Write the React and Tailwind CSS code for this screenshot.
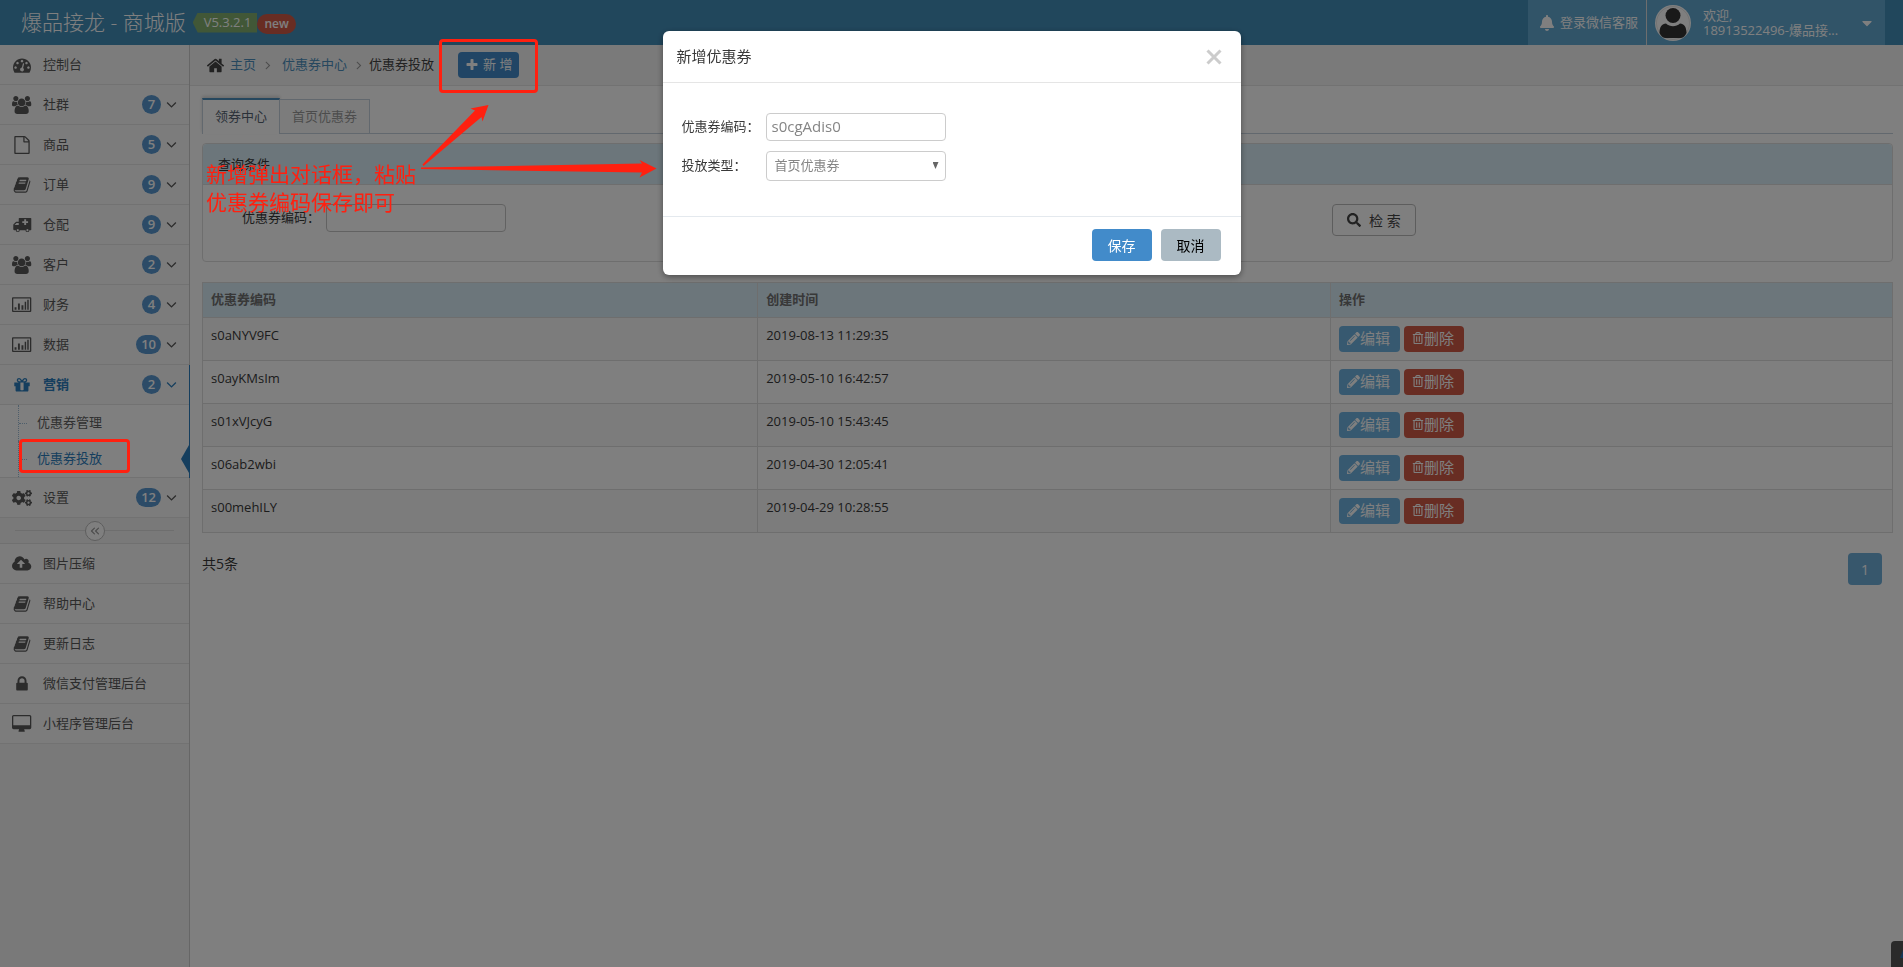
import { FaBell, FaCaretDown, FaCogs, FaPencilAlt, FaRegTrashAlt, FaSearch } from 'react-icons/fa';
import { ChevronsLeft } from 'lucide-react';

const ICONS = {
  dashboard: { w: 1792, d: 'M384 1152q0-53-37.5-90.5t-90.5-37.5-90.5 37.5-37.5 90.5 37.5 90.5 90.5 37.5 90.5-37.5 37.5-90.5zm192-448q0-53-37.5-90.5t-90.5-37.5-90.5 37.5-37.5 90.5 37.5 90.5 90.5 37.5 90.5-37.5 37.5-90.5zm428 481l101-382q6-26-7.5-48.5t-38.5-29.5-48 6.5-30 39.5l-101 382q-60 5-107 43.5t-63 98.5q-20 77 20 146t117 89 146-20 89-117q16-60-6-117t-72-91zm660-33q0-53-37.5-90.5t-90.5-37.5-90.5 37.5-37.5 90.5 37.5 90.5 90.5 37.5 90.5-37.5 37.5-90.5zm-640-640q0-53-37.5-90.5t-90.5-37.5-90.5 37.5-37.5 90.5 37.5 90.5 90.5 37.5 90.5-37.5 37.5-90.5zm448 192q0-53-37.5-90.5t-90.5-37.5-90.5 37.5-37.5 90.5 37.5 90.5 90.5 37.5 90.5-37.5 37.5-90.5zm320 448q0 261-141 483-19 29-54 29h-1402q-35 0-54-29-141-221-141-483 0-182 71-348t191-286 286-191 348-71 348 71 286 191 191 286 71 348z' },
  users: { w: 1920, d: 'M593 896q-162 5-265 128h-134q-82 0-138-40.5t-56-118.5q0-353 124-353 6 0 43.5 21t97.5 42.5 119 21.5q67 0 133-23-5 37-5 66 0 139 81 256zm1071 637q0 120-73 189.5t-194 69.5h-874q-121 0-194-69.5t-73-189.5q0-53 3.5-103.5t14-109 26.5-108.5 43-97.5 62-81 85.5-53.5 111.5-20q10 0 43 21.5t73 48 107 48 135 21.5 135-21.5 107-48 73-48 43-21.5q61 0 111.5 20t85.5 53.5 62 81 43 97.5 26.5 108.5 14 109 3.5 103.5zm-1024-1277q0 106-75 181t-181 75-181-75-75-181 75-181 181-75 181 75 75 181zm704 384q0 159-112.5 271.5t-271.5 112.5-271.5-112.5-112.5-271.5 112.5-271.5 271.5-112.5 271.5 112.5 112.5 271.5zm576 225q0 78-56 118.5t-138 40.5h-134q-103-123-265-128 81-117 81-256 0-29-5-66 66 23 133 23 59 0 119-21.5t97.5-42.5 43.5-21q124 0 124 353zm-128-609q0 106-75 181t-181 75-181-75-75-181 75-181 181-75 181 75 75 181z' },
  file: { w: 1792, d: 'M1596 380q28 28 48 76t20 88v1152q0 40-28 68t-68 28h-1344q-40 0-68-28t-28-68v-1600q0-40 28-68t68-28h896q40 0 88 20t76 48zm-444-244v376h376q-10-29-22-41l-313-313q-12-12-41-22zm384 1528v-1024h-416q-40 0-68-28t-28-68v-416h-768v1536h1280z' },
  book: { w: 1792, d: 'M1703 478q40 57 18 129l-275 906q-19 64-76.5 107.5t-122.5 43.5h-923q-77 0-148.5-53.5t-99.5-131.5q-24-67-2-127 0-4 3-27t4-37q1-8-3-21.5t-3-19.5q2-11 8-21t16.5-23.5 16.5-23.5q23-38 45-91.5t30-91.5q3-10 .5-30t-.5-28q3-11 17-28t17-23q21-36 42-92t25-90q1-9-2.5-32t.5-28q4-13 22-30.5t22-22.5q19-26 42.5-84.5t27.5-96.5q1-8-3-25.5t-2-26.5q2-8 9-18t18-23 17-21q8-12 16.5-30.5t15-35 16-36 19.5-32 26.5-23.5 36-11.5 47.5 5.5l-1 3q38-9 51-9h761q74 0 114 56t18 130l-274 906q-36 119-71.5 153.5t-128.5 34.5h-869q-27 0-38 15-11 16-1 43 24 70 144 70h923q29 0 56-15.5t35-41.5l300-987q7-22 5-57 38 15 59 43zm-1064 2q-4 13 2 22.5t20 9.5h608q13 0 25.5-9.5t16.5-22.5l21-64q4-13-2-22.5t-20-9.5h-608q-13 0-25.5 9.5t-16.5 22.5zm-83 256q-4 13 2 22.5t20 9.5h608q13 0 25.5-9.5t16.5-22.5l21-64q4-13-2-22.5t-20-9.5h-608q-13 0-25.5 9.5t-16.5 22.5z' },
  ambulance: { w: 1920, d: 'M736 192H1856q64 0 64 64V1344q0 64-64 64H1728a192 192 0 0 1-384 0H768a192 192 0 0 1-384 0H256q-128 0-128-96V880q0-40 28-68l200-200q28-28 68-28H672V256q0-64 64-64zM256 896H672V704H450L256 896zM1216 320V512H1024V704H1216V896H1408V704H1600V512H1408V320zM576 1304a104 104 0 1 0 .1 0zM1536 1304a104 104 0 1 0 .1 0z' },
  chart: { w: 1920, d: 'M96 128H1824q96 0 96 96V1504q0 96-96 96H96q-96 0-96-96V224q0-96 96-96zM128 256V1472H1792V256zM256 1120H448V1376H256zM592 736H784V1376H592zM944 928H1136V1376H944zM1264 576H1408V1376H1264zM1520 384H1664V1376H1520z' },
  gift: { w: 1792, d: 'M1056 1356v-716h-320v716q0 25 18 38.5t46 13.5h192q28 0 46-13.5t18-38.5zm-456-844h195l-126-161q-26-31-69-31-40 0-68 28t-28 68 28 68 68 28zm688-96q0-40-28-68t-68-28q-43 0-69 31l-125 161h194q40 0 68-28t28-68zm376 256v320q0 14-9 23t-23 9h-96v416q0 40-28 68t-68 28h-1088q-40 0-68-28t-28-68v-416h-96q-14 0-23-9t-9-23v-320q0-14 9-23t23-9h440q-93 0-158.5-65.5t-65.5-158.5 65.5-158.5 158.5-65.5q107 0 168 77l128 165 128-165q61-77 168-77 93 0 158.5 65.5t65.5 158.5-65.5 158.5-158.5 65.5h440q14 0 23 9t9 23z' },
  home: { w: 1792, d: 'M1472 992v480q0 26-19 45t-45 19h-384v-384h-256v384h-384q-26 0-45-19t-19-45v-480q0-1 .5-3t.5-3l575-474 575 474q1 2 1 6zm223-69l-62 74q-8 9-21 11h-3q-13 0-21-7l-692-577-692 577q-12 8-24 7-13-2-21-11l-62-74q-8-10-7-23.5t11-21.5l719-599q32-26 76-26t76 26l244 204v-195q0-14 9-23t23-9h192q14 0 23 9t9 23v408l219 182q10 8 11 21.5t-7 23.5z' },
  cloud: { w: 1920, d: 'M1280 864q0-14-9-23l-352-352q-9-9-23-9t-23 9l-351 351q-10 12-10 24 0 14 9 23t23 9h224v352q0 13 9.5 22.5t22.5 9.5h192q13 0 22.5-9.5t9.5-22.5v-352h224q13 0 22.5-9.5t9.5-22.5zm640 288q0 159-112.5 271.5t-271.5 112.5h-1088q-185 0-316.5-131.5t-131.5-316.5q0-130 70-240t188-165q-2-30-2-43 0-212 150-362t362-150q156 0 285.5 87t188.5 231q71-62 166-62 106 0 181 75t75 181q0 76-41 138 130 31 213.5 135.5t83.5 238.5z' },
  lock: { w: 1792, d: 'M640 768h512v-192q0-106-75-181t-181-75-181 75-75 181v192zm832 96v576q0 40-28 68t-68 28h-960q-40 0-68-28t-28-68v-576q0-40 28-68t68-28h32v-192q0-184 132-316t316-132 316 132 132 316v192h32q40 0 68 28t28 68z' },
  desktop: { w: 1920, d: 'M1792 992v-832q0-13-9.5-22.5t-22.5-9.5h-1600q-13 0-22.5 9.5t-9.5 22.5v832q0 13 9.5 22.5t22.5 9.5h1600q13 0 22.5-9.5t9.5-22.5zm128-832v1088q0 66-47 113t-113 47h-544q0 37 16 77.5t32 71 16 43.5q0 26-19 45t-45 19h-512q-26 0-45-19t-19-45q0-14 16-44t32-70 16-78h-544q-66 0-113-47t-47-113v-1088q0-66 47-113t113-47h1600q66 0 113 47t47 113z' },
  plus: { w: 1792, d: 'M1600 736v192q0 40-28 68t-68 28h-416v416q0 40-28 68t-68 28h-192q-40 0-68-28t-28-68v-416h-416q-40 0-68-28t-28-68v-192q0-40 28-68t68-28h416v-416q0-40 28-68t68-28h192q40 0 68 28t28 68v416h416q40 0 68 28t28 68z' },
  angleDown: { w: 1792, d: 'M1395 736q0 13-10 23l-466 466q-10 10-23 10t-23-10l-466-466q-10-10-10-23t10-23l50-50q10-10 23-10t23 10l393 393 393-393q10-10 23-10t23 10l50 50q10 10 10 23z' },
  angleRight: { w: 1792, d: 'M1171 960q0 13-10 23l-466 466q-10 10-23 10t-23-10l-50-50q-10-10-10-23t10-23l393-393-393-393q-10-10-10-23t10-23l50-50q10-10 23-10t23 10l466 466q10 10 10 23z' },
};

function Icon({ name, className }) {
  const { w, d } = ICONS[name];
  return (
    <svg viewBox={`0 0 ${w} 1792`} className={className} fill="currentColor" aria-hidden="true">
      <path fillRule="evenodd" d={d} />
    </svg>
  );
}

const menu = [
  { icon: 'dashboard', label: '控制台' },
  { icon: 'users', label: '社群', count: 7 },
  { icon: 'file', label: '商品', count: 5 },
  { icon: 'book', label: '订单', count: 9 },
  { icon: 'ambulance', label: '仓配', count: 9 },
  { icon: 'users', label: '客户', count: 2 },
  { icon: 'chart', label: '财务', count: 4 },
  { icon: 'chart', label: '数据', count: 10 },
  { icon: 'gift', label: '营销', count: 2, children: ['优惠券管理', '优惠券投放'] },
  { icon: 'cogs', label: '设置', count: 12 },
];

const tools = [
  { icon: 'cloud', label: '图片压缩' },
  { icon: 'book', label: '帮助中心' },
  { icon: 'book', label: '更新日志' },
  { icon: 'lock', label: '微信支付管理后台' },
  { icon: 'desktop', label: '小程序管理后台' },
];

const coupons = [
  { code: 's0aNYV9FC', time: '2019-08-13 11:29:35' },
  { code: 's0ayKMsIm', time: '2019-05-10 16:42:57' },
  { code: 's01xVJcyG', time: '2019-05-10 15:43:45' },
  { code: 's06ab2wbi', time: '2019-04-30 12:05:41' },
  { code: 's00mehILY', time: '2019-04-29 10:28:55' },
];

function Header() {
  return (
    <header className="flex h-[45px] items-stretch bg-[#438eb9] pr-[18px] text-white">
      <div className="flex items-center pl-[21px]">
        <a href="#" className="text-[21px] leading-[45px] font-light">爆品接龙 - 商城版</a>
        <span className="ml-[7px] flex h-5 items-center bg-[#82af6f] pr-1.5 pl-[11px] text-[13px] [clip-path:polygon(5px_0,100%_0,100%_100%,5px_100%,0_50%)]">V5.3.2.1</span>
        <span className="mt-[2px] flex h-5 items-center rounded-full bg-[#d15b47] px-[7px] text-[12px] font-semibold">new</span>
      </div>
      <div className="ml-auto flex">
        <a href="#" className="flex items-center gap-[5px] border-r border-[#ddd] bg-[#62a8d1] pr-2 pl-[11px] text-[13px]">
          <FaBell className="size-4" />
          登录微信客服
        </a>
        <button className="flex items-center bg-[#62a8d1] pr-2.5 pl-2 text-left">
          <svg viewBox="0 0 36 36" className="size-9" aria-hidden="true">
            <circle cx="18" cy="18" r="18" fill="#fff" />
            <circle cx="18" cy="18" r="16.5" fill="none" stroke="#d8d8d8" strokeWidth="0.6" />
            <circle cx="18" cy="10.5" r="7.5" fill="#333" />
            <path d="M4.500 28c0-6 2.500-9.500 6.500-9.500 4 3.500 10 3.500 14 0 4 0 6.500 3.500 6.500 9.500-1 3-4 5-6 5h-15c-2 0-5-2-6-5z" fill="#333" />
          </svg>
          <span className="ml-3 w-[152px] text-[13px] leading-[15px]">
            欢迎,<br />18913522496-爆品接...
          </span>
          <FaCaretDown className="ml-1 size-4" />
        </button>
      </div>
    </header>
  );
}

function MenuRow({ item, active }) {
  return (
    <a
      href="#"
      className={`flex h-10 items-center border-b border-[#e5e5e5] bg-[#f8f8f8] pr-[9px] pl-[7px] text-[13px] ${active ? 'font-bold text-[#2b7dbc]' : 'text-[#585858]'}`}
    >
      <span className="mr-1.5 flex w-[30px] justify-center">
        {item.icon === 'cogs' ? <FaCogs className="size-5" /> : <Icon name={item.icon} className="h-[18px]" />}
      </span>
      {item.label}
      {item.count && (
        <>
          <span className="ml-auto flex h-[19px] min-w-[19px] items-center justify-center rounded-full bg-[#5897cf] px-[5px] text-[13px] font-semibold text-white">{item.count}</span>
          <Icon name="angleDown" className="ml-[2px] size-[17px]" />
        </>
      )}
    </a>
  );
}

function Sidebar() {
  return (
    <nav className="w-[190px] shrink-0 border-r border-[#ccc] bg-[#f2f2f2]">
      {menu.map((item) =>
        item.children ? (
          <div key={item.label} className="-mr-[2px] border-r-2 border-[#2b7dbc]">
            <MenuRow item={item} active />
            <ul className="border-b border-[#e5e5e5] bg-white pl-[18px] text-[13px]">
              {item.children.map((child, i) => (
                <li key={child} className="relative flex h-9 items-center border-l border-dotted border-[#9dbdd6]">
                  <span className="w-2 border-t border-dotted border-[#9dbdd6]" />
                  <a href="#" className={`ml-2.5 ${i === 1 ? 'text-[#2b7dbc]' : 'text-[#616161]'}`}>{child}</a>
                  {i === 1 && <span className="absolute top-1 right-0 h-7 w-2 bg-[#2b7dbc] [clip-path:polygon(100%_0,100%_100%,0_50%)]" />}
                </li>
              ))}
            </ul>
          </div>
        ) : (
          <MenuRow key={item.label} item={item} />
        ),
      )}
      <div className="flex h-[26px] items-center border-b border-[#e0e0e0] bg-[#f3f3f3] px-[15px]">
        <span className="flex-1 border-t border-[#ddd]" />
        <button aria-label="收起菜单" className="flex size-5 items-center justify-center rounded-full border border-[#bbb] bg-white text-[#999]">
          <ChevronsLeft className="size-3.5" />
        </button>
        <span className="flex-1 border-t border-[#ddd]" />
      </div>
      {tools.map((item) => (
        <MenuRow key={item.label} item={item} />
      ))}
    </nav>
  );
}

function Breadcrumb() {
  return (
    <div className="flex h-[41px] items-center border-b border-[#e5e5e5] bg-[#f5f5f5] pl-4 text-[13px] text-[#4c8fbd]">
      <Icon name="home" className="size-[19px] text-[#444]" />
      <a href="#" className="ml-[5px]">主页</a>
      <Icon name="angleRight" className="mr-[3px] ml-[5px] size-3.5 text-[#999]" />
      <a href="#" className="ml-1">优惠券中心</a>
      <Icon name="angleRight" className="mr-[3px] ml-[5px] size-3.5 text-[#999]" />
      <span className="text-[#444]">优惠券投放</span>
      <button className="ml-6 flex h-[26px] items-center gap-1 rounded-sm bg-[#428bca] px-[7px] text-[13px] whitespace-pre text-white">
        <Icon name="plus" className="size-3.5" />
        新 增
      </button>
    </div>
  );
}

function CouponTable() {
  return (
    <table className="mt-5 w-full border-collapse text-left text-[13px] text-[#393939]">
      <thead>
        <tr className="h-[35px] bg-[#d9edf7] text-[#707070]">
          <th className="w-[32.85%] border border-[#ddd] px-2 font-bold">优惠券编码</th>
          <th className="w-[33.9%] border border-[#ddd] px-2 font-bold">创建时间</th>
          <th className="border border-[#ddd] px-2 font-bold">操作</th>
        </tr>
      </thead>
      <tbody>
        {coupons.map((c) => (
          <tr key={c.code} className="odd:bg-[#f9f9f9]">
            <td className="border border-[#ddd] px-2 py-[7px] align-top leading-5">{c.code}</td>
            <td className="border border-[#ddd] px-2 py-[7px] align-top leading-5">{c.time}</td>
            <td className="border border-[#ddd] p-2">
              <div className="flex gap-1 text-[15px] leading-6 text-white">
                <button className="flex h-[26px] items-center rounded-sm bg-[#6fb3e0] pr-2.5 pb-[2px] pl-2">
                  <FaPencilAlt className="size-[13px]" />编辑
                </button>
                <button className="flex h-[26px] items-center rounded-sm bg-[#d15b47] pr-2.5 pb-[2px] pl-2">
                  <FaRegTrashAlt className="size-3" />删除
                </button>
              </div>
            </td>
          </tr>
        ))}
      </tbody>
    </table>
  );
}

function Main() {
  return (
    <main className="min-w-0 flex-1 bg-white">
      <Breadcrumb />
      <div className="px-3 pt-3 pr-2.5">
        <div className="flex items-end border-b border-[#c5d0dc] text-[13px]" role="tablist">
          <button role="tab" aria-selected="true" className="-mb-px h-9 border-x border-t-2 border-[#c5d0dc] border-t-[#4c8fbd] bg-white px-3 text-[#576373] shadow-[0_-2px_3px_rgba(0,0,0,0.15)]">领券中心</button>
          <button role="tab" aria-selected="false" className="h-[34px] border-t border-r border-[#c5d0dc] bg-[#f9f9f9] px-3 text-[#999]">首页优惠券</button>
        </div>

        {/* 查询条件 */}
        <section className="mt-[9px] rounded border border-[#ddd] text-[13px] text-[#393939]">
          <h2 className="h-[41px] rounded-t border-b border-[#ddd] bg-[#d9edf7] px-[15px] leading-10">查询条件</h2>
          <form className="grid h-[76px] grid-cols-3 items-start pt-[19px]">
            <div className="col-span-2 flex h-7 items-center pl-[39px]">
              <label htmlFor="search-code" className="w-[84px]">优惠券编码：</label>
              <input id="search-code" className="h-7 w-[180px] rounded border border-[#c5c5c5] bg-white px-1.5" />
            </div>
            <div>
              <button type="button" className="ml-[3px] flex h-8 items-center gap-2 rounded-sm border border-[#bbb] px-3.5 text-[14px] text-[#444]">
                <FaSearch className="size-3.5" />
                检 索
              </button>
            </div>
          </form>
        </section>

        <CouponTable />

        <div className="mt-5 flex justify-between pr-[11px] text-[14px] text-[#393939]">
          <span className="leading-[22px]">共5条</span>
          <button className="h-8 w-[34px] rounded-sm bg-[#6faed9] text-[14px] text-white">1</button>
        </div>
      </div>
    </main>
  );
}

function CouponDialog() {
  return (
    <div className="fixed inset-0 z-20 bg-black/50 pt-[31px]">
      <div role="dialog" aria-labelledby="dialog-title" className="mx-auto w-[578px] rounded-md bg-white text-[13px] text-[#393939] shadow-[0_2px_6px_rgba(0,0,0,0.4)]">
        <div className="flex h-[52px] items-center justify-between border-b border-[#e5e5e5] pr-[17px] pl-3.5">
          <h2 id="dialog-title" className="text-[15px]">新增优惠券</h2>
          <button aria-label="关闭" className="flex size-5 items-center justify-center text-[#ccc]">
            <svg viewBox="0 0 16 16" className="size-4" stroke="currentColor" strokeWidth="3" aria-hidden="true">
              <path d="M1.500 1.500l13 13M14.500 1.500l-13 13" />
            </svg>
          </button>
        </div>
        <div className="flex flex-col gap-2.5 px-[19px] pt-[30px] pb-[35px]">
          <div className="flex items-center">
            <label htmlFor="coupon-code" className="w-[84px]">优惠券编码：</label>
            <input id="coupon-code" defaultValue="s0cgAdis0" className="h-7 w-[180px] rounded border border-[#ccc] px-[5px] pb-[2px] text-[15px] text-[#858585]" />
          </div>
          <div className="flex items-center">
            <label htmlFor="coupon-type" className="w-[84px]">投放类型：</label>
            <div className="relative">
              <select id="coupon-type" className="h-[30px] w-[180px] appearance-none rounded border border-[#ccc] bg-white pl-2 text-[13px] text-[#858585]">
                <option>首页优惠券</option>
              </select>
              <span className="pointer-events-none absolute top-[11px] right-[7px] h-[7px] w-[6px] bg-[#666] [clip-path:polygon(0_0,100%_0,50%_100%)]" />
            </div>
          </div>
        </div>
        <div className="flex h-[59px] items-start justify-end gap-[9px] border-t border-[#e4e9ee] pt-3 pr-5">
          <button className="h-8 w-[60px] rounded bg-[#428bca] text-[14px] text-white">保存</button>
          <button className="h-8 w-[60px] rounded bg-[#abbac3] text-[14px] text-black">取消</button>
        </div>
      </div>
    </div>
  );
}

/* 操作说明标注 */
function Annotations() {
  return (
    <div className="pointer-events-none absolute inset-0 z-30 text-[#ff2010]">
      <div className="absolute top-[39px] left-[439px] h-[54px] w-[99px] rounded-sm border-[3px] border-current" />
      <div className="absolute top-[439px] left-[19px] h-[34px] w-[111px] rounded-sm border-[3px] border-current" />
      <p className="absolute top-[160px] left-[206px] text-[21px] leading-7 whitespace-nowrap">
        新增弹出对话框，粘贴<br />优惠券编码保存即可
      </p>
      <svg className="absolute top-[95px] left-[410px]" width="250" height="90" viewBox="410 95 250 90" fill="currentColor">
        <path d="M422.500 164.500L475 110.500 470.500 108.500 488.500 105 482.500 121.500 481.500 117 423.500 166Z" />
        <path d="M421 167.500L642 163.500 639.500 160 656.500 168.500 639.500 177.500 642 172.500 421 169Z" />
      </svg>
    </div>
  );
}

export default function App() {
  return (
    <div className="relative flex min-h-screen flex-col overflow-hidden font-['Open_Sans','Noto_Sans_CJK_SC',sans-serif]">
      <Header />
      <div className="flex flex-1">
        <Sidebar />
        <Main />
      </div>
      <button aria-label="回到顶部" className="fixed right-0 bottom-0 flex h-[26px] w-3 items-center justify-end overflow-hidden rounded-tl-sm bg-[#555]">
        <span className="h-2 w-[3px] bg-[#2b6fb0] [clip-path:polygon(100%_0,100%_100%,0_100%)]" />
      </button>
      <CouponDialog />
      <Annotations />
    </div>
  );
}
